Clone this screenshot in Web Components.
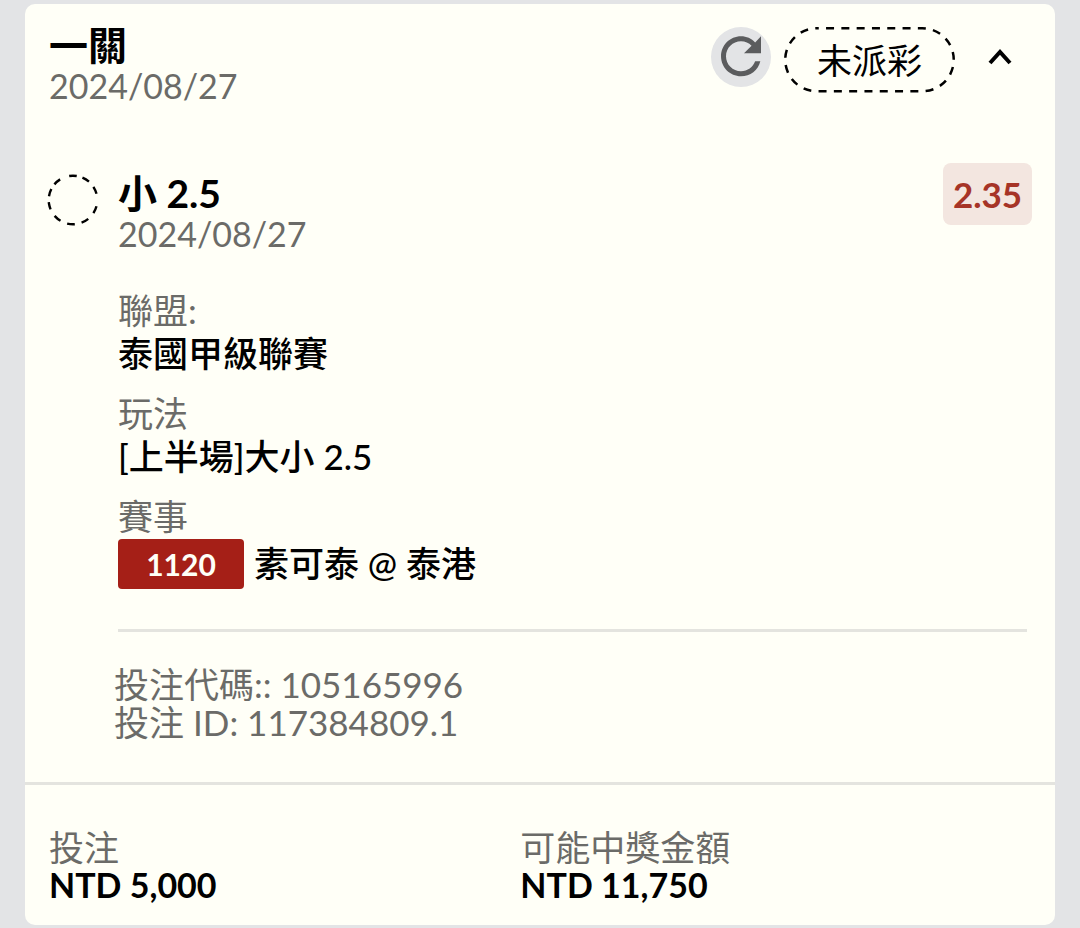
<!DOCTYPE html>
<html lang="zh-Hant">
<head>
<meta charset="utf-8">
<meta name="viewport" content="width=device-width, initial-scale=1">
<title>一關 2024/08/27</title>
<style>
  body {
    margin: 0;
    padding: 4px 25px 3px;
    background: #e3e4e6;
    color: #000;
    font-family: Lato, "Noto Sans CJK TC", sans-serif;
    font-size: 35px;
    line-height: 38px;
    --muted: #6b6b68;
    --line: #e4e4df;
    --red: #a51f17;
  }
</style>
</head>
<body>
<bet-card>
  <bet-header slot="header" date="2024/08/27" status="未派彩">一關</bet-header>
  <bet-leg date="2024/08/27" odds="2.35">
    <span slot="pick">小 2.5</span>
    <bet-field label="聯盟:">泰國甲級聯賽</bet-field>
    <bet-field label="玩法">[上半場]大小 2.5</bet-field>
    <bet-field label="賽事"><match-tag>1120</match-tag>素可泰 @ 泰港</bet-field>
    <div slot="codes">投注代碼:: 105165996</div>
    <div slot="codes">投注 ID: 117384809.1</div>
  </bet-leg>
  <bet-amount slot="footer" label="投注">NTD 5,000</bet-amount>
  <bet-amount slot="footer" label="可能中獎金額">NTD 11,750</bet-amount>
</bet-card>

<script>
  class BaseElement extends HTMLElement {
    connectedCallback() {
      if (this.shadowRoot) return;
      const t = document.createElement('template');
      t.innerHTML = this.render();
      this.attachShadow({ mode: 'open' }).append(t.content.cloneNode(true));
    }
    attr(name) { return this.getAttribute(name) || ''; }
  }

  customElements.define('bet-card', class extends BaseElement {
    render() {
      return `<style>
        :host { display: block; background: #fffff7; border-radius: 10px; }
        .main { padding: 19px 23px 41px 24px; }
        footer { display: grid; grid-template-columns: 12fr 13fr; padding: 43px 24px 21px; border-top: 3px solid var(--line); }
      </style>
      <article>
        <div class="main"><slot name="header"></slot><slot></slot></div>
        <footer><slot name="footer"></slot></footer>
      </article>`;
    }
  });

  customElements.define('bet-header', class extends BaseElement {
    render() {
      return `<style>
        :host { display: flex; justify-content: space-between; align-items: flex-start; }
        h1 { margin: 0; font-size: 39px; line-height: 44px; font-weight: 700; }
        time { display: block; color: var(--muted); font-size: 34px; }
        .actions { display: flex; align-items: flex-start; padding-top: 4px; }
        button { display: grid; place-items: center; padding: 0; border: 0; background: none; cursor: pointer; }
        .refresh { width: 60px; height: 60px; border-radius: 50%; background: #e3e4e6; color: #5b5c5e; }
        .status { position: relative; display: grid; place-items: center; width: 171px; height: 66px; margin: 0 23px 0 13px; line-height: 66px; }
        .status svg { position: absolute; inset: 0; }
        .toggle { width: 44px; height: 60px; margin-right: 10px; }
        svg { display: block; }
      </style>
      <div><h1><slot></slot></h1><time>${this.attr('date')}</time></div>
      <div class="actions">
        <button class="refresh" aria-label="重新整理">
          <svg width="60" height="60" viewBox="0 0 24 24" fill="currentColor"><path d="M17.65 6.15C16.2 4.6 14.21 3.7 12 3.7c-4.42 0-7.99 3.58-7.99 8s3.57 8 7.99 8c3.73 0 6.84-2.35 7.73-6h-2.08c-.82 2.33-3.04 4-5.65 4-3.31 0-6-2.69-6-6s2.69-6 6-6c1.66 0 3.14.69 4.22 1.78L13.2 10.5H20V3.7l-2.35 2.45z"/></svg>
        </button>
        <div class="status">
          <svg width="171" height="66" viewBox="0 0 171 66" fill="none" stroke="#000" stroke-width="2.5"><rect x="1.25" y="1.25" width="168.5" height="63" rx="31.5" stroke-dasharray="8 7.3" stroke-dashoffset="6"/></svg>
          <span>${this.attr('status')}</span>
        </div>
        <button class="toggle" aria-label="收合" aria-expanded="true">
          <svg width="24" height="18" viewBox="0 0 24 18" fill="none" stroke="#000" stroke-width="4"><path d="M2 15 12 4l10 11"/></svg>
        </button>
      </div>`;
    }
  });

  customElements.define('bet-leg', class extends BaseElement {
    render() {
      return `<style>
        :host { display: grid; grid-template-columns: 49px 1fr; column-gap: 20px; padding-top: 58px; }
        .mark { display: block; margin-top: 11px; overflow: visible; }
        .top { display: flex; justify-content: space-between; align-items: flex-start; }
        .name { padding-top: 8px; }
        h2 { margin: 0; font-size: 39px; line-height: 44px; font-weight: 700; }
        time { display: block; color: var(--muted); font-size: 34px; }
        .odds { width: 89px; border-radius: 8px; background: #f3e6e0; color: #a63427; font-weight: 700; line-height: 62px; text-align: center; }
        .fields { display: grid; gap: 17px; padding-top: 36px; }
        hr { height: 3px; margin: 40px 5px 33px 0; border: 0; background: var(--line); }
        .codes { margin-left: -4px; color: var(--muted); }
      </style>
      <svg class="mark" width="50" height="52" viewBox="0 0 50 52" fill="none" stroke="#000" stroke-width="2.4">
        <circle cx="24" cy="26" r="24.3" pathLength="360" transform="rotate(-99 24 26)" stroke-dasharray="18 14 18 16 18 30 18 18 18 17 18 17 18 18 18 14 18 13 18 23"/>
      </svg>
      <section>
        <div class="top">
          <div class="name"><h2><slot name="pick"></slot></h2><time>${this.attr('date')}</time></div>
          <div class="odds">${this.attr('odds')}</div>
        </div>
        <div class="fields"><slot></slot></div>
        <hr>
        <div class="codes"><slot name="codes"></slot></div>
      </section>`;
    }
  });

  customElements.define('bet-field', class extends BaseElement {
    render() {
      return `<style>
        :host { display: block; }
        .label { color: var(--muted); line-height: 42px; }
        .value { display: flex; align-items: center; gap: 10px; font-weight: 500; line-height: 44px; }
      </style>
      <div class="label">${this.attr('label')}</div>
      <div class="value"><slot></slot></div>`;
    }
  });

  customElements.define('match-tag', class extends BaseElement {
    render() {
      return `<style>
        :host { display: block; width: 126px; margin-top: 2px; border-radius: 4px; background: var(--red); color: #fffff7; font-size: 30px; font-weight: 700; line-height: 50px; text-align: center; }
      </style><slot></slot>`;
    }
  });

  customElements.define('bet-amount', class extends BaseElement {
    render() {
      return `<style>
        :host { display: block; }
        .label { color: var(--muted); }
        .value { font-size: 34px; font-weight: 700; }
      </style>
      <div class="label">${this.attr('label')}</div>
      <div class="value"><slot></slot></div>`;
    }
  });
</script>
</body>
</html>
